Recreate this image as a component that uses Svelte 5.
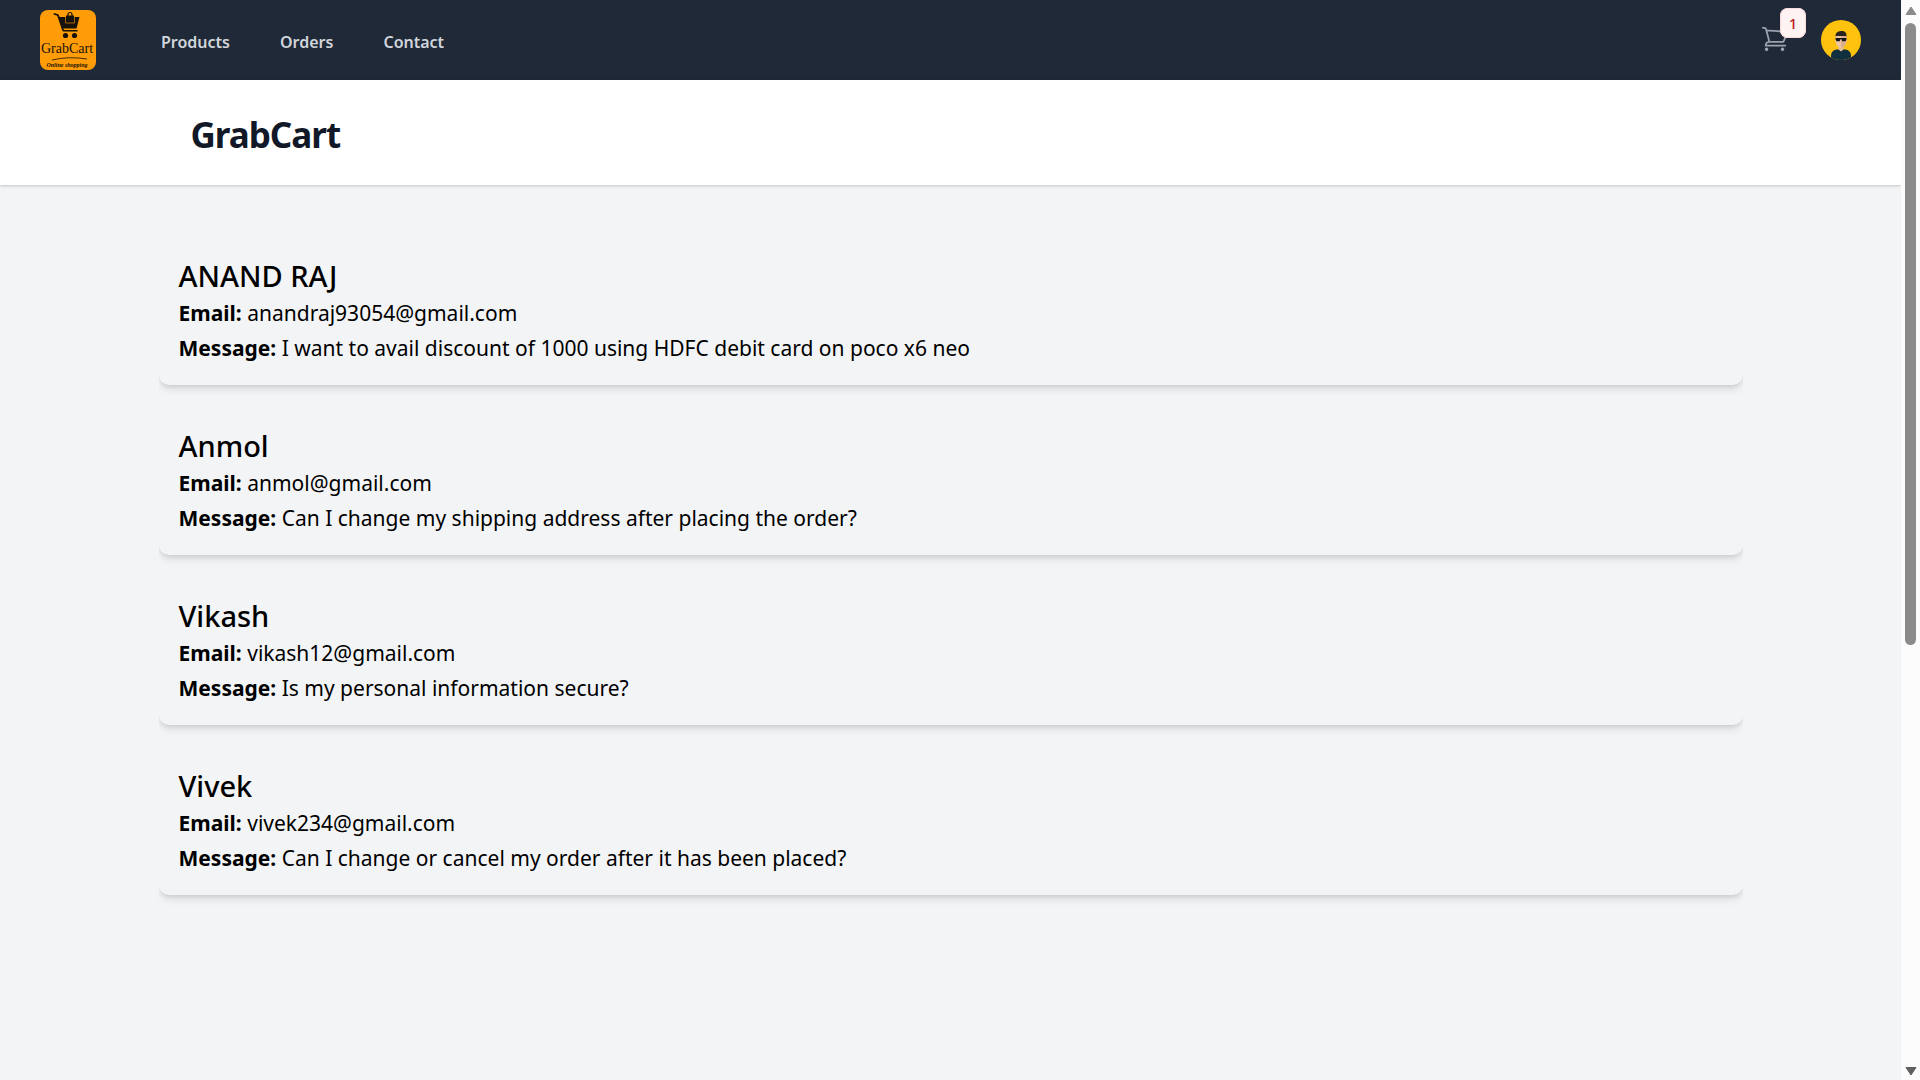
<script>
  const links = ['Products', 'Orders', 'Contact'];
  const messages = [
    { name: 'ANAND RAJ', email: 'anandraj93054@gmail.com', text: 'I want to avail discount of 1000 using HDFC debit card on poco x6 neo' },
    { name: 'Anmol', email: 'anmol@gmail.com', text: 'Can I change my shipping address after placing the order?' },
    { name: 'Vikash', email: 'vikash12@gmail.com', text: 'Is my personal information secure?' },
    { name: 'Vivek', email: 'vivek234@gmail.com', text: 'Can I change or cancel my order after it has been placed?' }
  ];
</script>

<div class="window">
  <div class="page">
    <nav class="navbar">
      <a class="logo" href="#home" aria-label="GrabCart home">
        <svg viewBox="0 0 56 60" width="56" height="60">
          <rect width="56" height="60" rx="8" fill="#ff9c07" />
          <path d="M14.500 4l3.500 1.200 5 14.800" fill="none" stroke="#17130b" stroke-width="1.800" stroke-linecap="round" stroke-linejoin="round" />
          <path d="M18.500 7H26v5h8V7h5.500L36.500 18.500H22z" fill="#17130b" />
          <path d="M26 5.500h8V13h-8z" fill="#17130b" />
          <path d="M28 6V4.500a2 2 0 0 1 4 0V6" fill="none" stroke="#17130b" stroke-width="1.200" />
          <path d="M25.500 7v6h9V7" fill="none" stroke="#ff9c07" stroke-width=".6" />
          <path d="M23.500 20.800h13.500" stroke="#17130b" stroke-width="1.600" stroke-linecap="round" />
          <circle cx="25.500" cy="25.500" r="2.600" fill="#17130b" />
          <circle cx="34.500" cy="25.500" r="2.600" fill="#17130b" />
          <text class="brand" x="27" y="43" text-anchor="middle">GrabCart</text>
          <path d="M12 50q17-4 35-1" fill="none" stroke="#17130b" stroke-width=".8" />
          <text class="tag" x="27" y="57" text-anchor="middle">Online shopping</text>
        </svg>
      </a>
      <div class="links">
        {#each links as link}<a href="#{link.toLowerCase()}">{link}</a>{/each}
      </div>
      <div class="actions">
        <button class="cart" aria-label="Cart">
          <svg viewBox="0 0 24 24" width="30" height="30" fill="none" stroke="#9ca3af" stroke-width="1.400" stroke-linecap="round" stroke-linejoin="round">
            <path d="M2.250 3h1.386c.51 0 .955.343 1.087.835l.383 1.437M7.500 14.250a3 3 0 0 0-3 3h15.750m-12.750-3h11.218c1.121-2.300 2.100-4.684 2.924-7.138a60.114 60.114 0 0 0-16.536-1.840M7.500 14.250 5.106 5.272M6 20.250a.75.75 0 1 1-1.500 0 .75.75 0 0 1 1.500 0Zm12.750 0a.75.75 0 1 1-1.500 0 .75.75 0 0 1 1.500 0Z" />
          </svg>
          <span class="badge">1</span>
        </button>
        <button class="avatar" aria-label="Open user menu">
          <svg viewBox="0 0 40 40" width="40" height="40">
            <defs><clipPath id="face"><circle cx="20" cy="20" r="20" /></clipPath></defs>
            <g clip-path="url(#face)">
              <rect width="40" height="40" fill="#ffc20e" />
              <path d="M10 40v-4q0-6 6-6.500l4-.500 4 .500q6 .500 6 6.500v4z" fill="#10303f" />
              <path d="M17.500 24h5v5.500l-2.500 2-2.500-2z" fill="#e8bd9b" />
              <path d="M14.500 16h11v5.500q-1 5.500-5.500 6-4.500-.500-5.500-6z" fill="#eec5a3" />
              <path d="M20 16h5.500v5.500q-1 5.500-5.500 6z" fill="#dcae8d" />
              <path d="M14.500 16.500q-.500-5 5.500-5.500t5.500 5.500l-1-.500h-9z" fill="#2a2421" />
              <path d="M14.500 18h11v1.200l-1 2h-3.200l-.8-2h-1l-.8 2h-3.200l-1-2z" fill="#111416" />
            </g>
          </svg>
        </button>
      </div>
    </nav>

    <header><h1>GrabCart</h1></header>

    <main>
      <div class="list">
        {#each messages as m}
          <article>
            <h2>{m.name}</h2>
            <p><strong>Email:</strong> {m.email}</p>
            <p><strong>Message:</strong> {m.text}</p>
          </article>
        {/each}
      </div>
    </main>
  </div>

  <div class="scrollbar" aria-hidden="true">
    <svg viewBox="0 0 12 10" width="12" height="10"><path d="M6 1 11 8.500H1z" fill="#8b8b8b" stroke="#8b8b8b" stroke-linejoin="round" /></svg>
    <div class="track"><div class="thumb"></div></div>
    <svg viewBox="0 0 12 10" width="12" height="10"><path d="M6 9 11 1.500H1z" fill="#606060" stroke="#606060" stroke-linejoin="round" /></svg>
  </div>
</div>

<style>
  :global(body) {
    margin: 0;
    background: #f3f4f6;
  }
  .window {
    display: flex;
    min-height: 100vh;
    font-family: 'Segoe UI', 'Noto Sans', 'Open Sans', sans-serif;
    color: #000;
  }
  .page {
    flex: 1;
    min-width: 0;
    background: #f3f4f6;
  }
  .navbar {
    display: flex;
    align-items: center;
    min-height: 80px;
    padding: 0 40px;
    background: #1f2937;
  }
  .logo {
    display: flex;
  }
  .brand {
    font: 14px 'Liberation Serif', serif;
    fill: #17130b;
  }
  .tag {
    font: italic bold 6px 'Liberation Serif', serif;
    fill: #17130b;
  }
  .links {
    display: flex;
    gap: 20px;
    margin-left: 50px;
  }
  .links a {
    padding: 13px 15px 10px;
    color: #d1d5db;
    font-size: 16px;
    font-weight: 600;
    line-height: 24px;
    text-decoration: none;
  }
  .actions {
    display: flex;
    align-items: center;
    gap: 31px;
    margin-left: auto;
  }
  button {
    display: flex;
    padding: 0;
    border: 0;
    background: none;
    font: inherit;
    cursor: pointer;
  }
  .cart {
    position: relative;
    padding-bottom: 2px;
  }
  .badge {
    position: absolute;
    left: 20px;
    bottom: 18px;
    width: 26px;
    border-radius: 8px;
    background: #fef2f2;
    box-shadow: inset 0 0 0 1px #fbdcdc;
    color: #b91c1c;
    font-size: 15px;
    font-weight: 500;
    line-height: 30px;
    text-align: center;
  }
  header {
    position: relative;
    background: #fff;
    box-shadow: 0 1px 4px rgba(0, 0, 0, 0.1), 0 1px 2px rgba(0, 0, 0, 0.1);
  }
  h1 {
    box-sizing: border-box;
    max-width: 1600px;
    margin: 0 auto;
    padding: 32px 40px 28px;
    color: #111827;
    font-size: 35px;
    font-weight: 700;
    line-height: 45px;
    letter-spacing: -1px;
  }
  main {
    box-sizing: border-box;
    max-width: 1600px;
    margin: 0 auto;
    padding: 50px 8px;
  }
  .list {
    display: flex;
    flex-direction: column;
    gap: 20px;
    padding-bottom: 20px;
    overflow: hidden;
  }
  article {
    padding: 21px 20px 19px;
    border-radius: 10px;
    box-shadow: 0 5px 8px -1px rgba(0, 0, 0, 0.1), 0 3px 5px -2px rgba(0, 0, 0, 0.1);
    font-size: 21px;
    line-height: 35px;
  }
  h2 {
    margin: 0;
    font-size: 29px;
    font-weight: 500;
    line-height: 40px;
  }
  p {
    margin: 0;
  }
  strong {
    font-weight: 700;
  }
  .scrollbar {
    position: sticky;
    top: 0;
    display: flex;
    flex-direction: column;
    align-items: center;
    gap: 7px;
    box-sizing: border-box;
    width: 19px;
    height: 100vh;
    padding: 6px 0 4px;
    background: #fcfcfc;
  }
  .track {
    flex: 1;
    width: 11px;
  }
  .thumb {
    height: 60%;
    border-radius: 6px;
    background: #8b8b8b;
  }
</style>
